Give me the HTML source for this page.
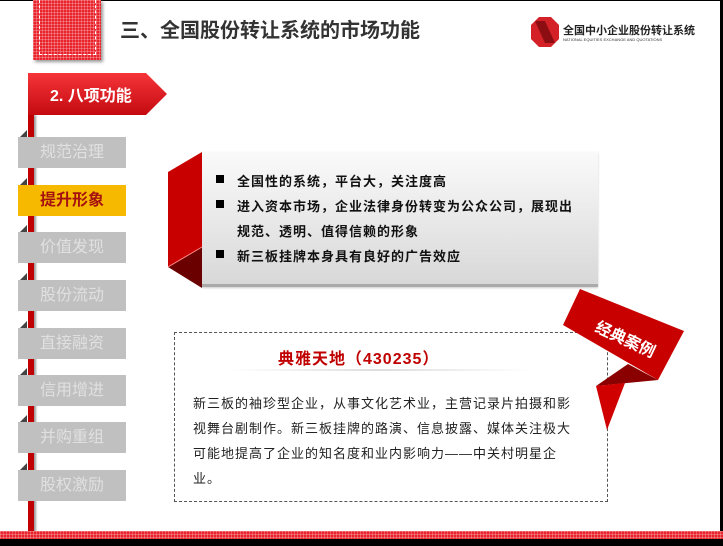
<!DOCTYPE html>
<html><head><meta charset="utf-8"><style>
body{margin:0;width:723px;height:546px;overflow:hidden;background:#fff;position:relative;font-family:"Liberation Sans","Noto Sans CJK SC",sans-serif}
.a{position:absolute}
.grid{background-color:#e8232b;background-image:linear-gradient(rgba(255,255,255,.25) 1px,transparent 1px),linear-gradient(90deg,rgba(255,255,255,.25) 1px,transparent 1px);background-size:3px 3px}
.mi{position:absolute;left:18px;width:108px;height:31px;background:#c0c0c0;color:#e0e0e0;font-size:16px;line-height:31px;text-align:center}
.mi:before{content:"";position:absolute;left:2px;top:-7px;border-left:7px solid transparent;border-bottom:7px solid #444}
.bl{position:absolute;left:237px;font-size:13px;font-weight:bold;color:#111;letter-spacing:1px;white-space:nowrap}
.bl i{position:absolute;left:-21px;top:4px;width:8px;height:8px;background:#000}
.bt{position:absolute;left:193px;font-size:13px;color:#222;line-height:25px;width:385px;letter-spacing:1px}
</style></head><body>
<div class="a" style="left:0;top:0;width:723px;height:1px;background:#000"></div>
<div class="a" style="right:0;top:0;width:3px;height:546px;background:#000"></div>
<div class="a grid" style="left:33px;top:0;width:68px;height:60px;box-shadow:2px 2px 3px #999"></div>
<div class="a" style="left:39px;top:0;width:55px;height:54px;border:1px dashed #fff;border-top:none"></div>
<div class="a" style="left:120px;top:14px;font-size:20px;font-weight:bold;color:#333">三、全国股份转让系统的市场功能</div>
<svg class="a" style="left:531px;top:17px" width="28" height="30" viewBox="0 0 28 30"><polygon points="8,0 20,0 28,8 28,22 20,30 8,30 0,22 0,8" fill="#d42027"/><polygon points="4,4 14,4 24,26 14,26" fill="#8c0d12"/></svg>
<div class="a" style="left:563px;top:22px;font-size:11px;font-weight:bold;color:#222">全国中小企业股份转让系统</div>
<div class="a" style="left:563px;top:37px;font-size:4px;color:#333;white-space:nowrap">NATIONAL EQUITIES EXCHANGE AND QUOTATIONS</div>
<div class="a" style="left:28px;top:115px;width:6px;height:417px;background:#c00000;box-shadow:2px 0 2px #999"></div>
<svg class="a" style="left:28px;top:73px" width="140" height="44"><defs><linearGradient id="f" x1="0" y1="0" x2="0" y2="1"><stop offset="0" stop-color="#f5353a"/><stop offset="1" stop-color="#c40a10"/></linearGradient></defs><polygon points="0,0 118,0 139,21 118,42 0,42" fill="url(#f)"/></svg>
<div class="a" style="left:50px;top:82px;font-size:16px;font-weight:bold;color:#fff">2. 八项功能</div>
<div class="mi" style="top:137px">规范治理</div>
<div class="mi" style="top:185px;background:#f7b900;color:#a51010;font-weight:bold">提升形象</div>
<div class="mi" style="top:232px">价值发现</div>
<div class="mi" style="top:280px">股份流动</div>
<div class="mi" style="top:328px">直接融资</div>
<div class="mi" style="top:375px">信用增进</div>
<div class="mi" style="top:422px">并购重组</div>
<div class="mi" style="top:470px">股权激励</div>
<div class="a" style="left:202px;top:152px;width:396px;height:132px;background:linear-gradient(#fafafa,#d8d8d8);border-bottom:3px solid #aaa;box-shadow:0 1px 2px #ccc"></div>
<svg class="a" style="left:168px;top:152px" width="36" height="136"><polygon points="0,20 34,0 34,95 0,115" fill="#c90000"/><polygon points="0,115 34,95 34,136" fill="#6a0000"/><polyline points="0,115 34,95" stroke="#f88" stroke-width="1" fill="none"/></svg>
<div class="bl" style="top:171px"><i></i>全国性的系统，平台大，关注度高</div>
<div class="bl" style="top:196px"><i></i>进入资本市场，企业法律身份转变为公众公司，展现出</div>
<div class="bl" style="top:221px">规范、透明、值得信赖的形象</div>
<div class="bl" style="top:246px"><i></i>新三板挂牌本身具有良好的广告效应</div>
<div class="a" style="left:174px;top:332px;width:432px;height:168px;border:1px dashed #555"></div>
<div class="a" style="left:278px;top:345px;font-size:16px;font-weight:bold;color:#c00000;letter-spacing:1px">典雅天地（430235）</div>
<div class="a" style="left:230px;top:369px;width:300px;height:2px;background:linear-gradient(90deg,transparent,#ddd,transparent)"></div>
<div class="bt" style="top:391px">新三板的袖珍型企业，从事文化艺术业，主营记录片拍摄和影视舞台剧制作。新三板挂牌的路演、信息披露、媒体关注极大可能地提高了企业的知名度和业内影响力——中关村明星企业。</div>
<svg class="a" style="left:560px;top:286px" width="128" height="148"><polygon points="36,100 68,78 98,94" fill="#8a0000"/><polygon points="36,100 65,97 47,144" fill="#d00000"/><polygon points="20,3 124,45 98,94 3,39" fill="#c80000"/></svg>
<div class="a" style="left:594px;top:326px;font-size:16px;font-weight:bold;color:#fff;transform:rotate(25deg);transform-origin:center">经典案例</div>
<div class="a grid" style="left:0;top:531px;width:723px;height:8px"></div>
<div class="a" style="left:0;top:539px;width:723px;height:7px;background:#000"></div>
</body></html>
